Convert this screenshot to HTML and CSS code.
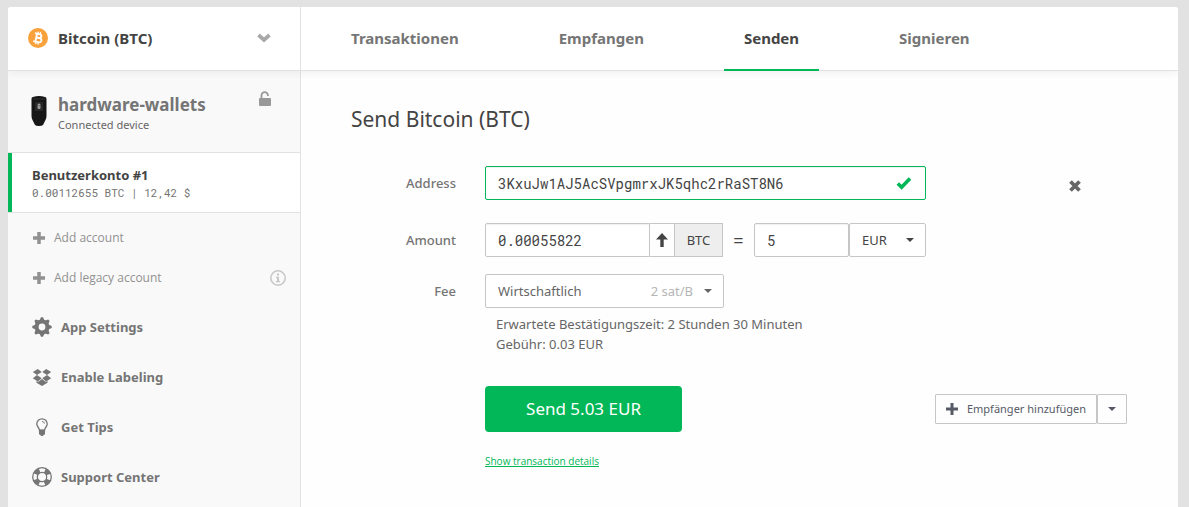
FILE: index.html
```html
<!DOCTYPE html>
<html lang="de">
<head>
    <meta charset="UTF-8">
    <meta name="viewport" content="width=device-width, initial-scale=1.0">
    <title>Send Bitcoin (BTC)</title>
    <link rel="stylesheet" href="styles.css">
</head>
<body>
    <div class="wallet">
        <header class="topbar">
            <button type="button" class="coin-select">
                <svg class="coin-logo" viewBox="0 0 20 20" aria-hidden="true">
                    <circle cx="10" cy="10" r="10" fill="#f9a13a"/>
                    <g transform="rotate(12 10 10)" fill="none" stroke="#fff" stroke-width="1.9">
                        <path d="M6 5.900h4.700c3 0 3 3.900 0 3.900H8.200M6 14.100h5.300c3.400 0 3.400-4.300 0-4.300M8.200 5.900v8.200"/>
                        <path d="M9 3.600v2M11.300 3.600v2M9 14.400v2M11.300 14.400v2" stroke-width="1.300"/>
                    </g>
                </svg>
                <span>Bitcoin (BTC)</span>
                <svg class="coin-chevron" viewBox="0 0 14 10" aria-hidden="true">
                    <path d="M1.500 2L7 7l5.500-5" fill="none" stroke="#a9a9a9" stroke-width="3.800"/>
                </svg>
            </button>
            <nav class="tabs">
                <a href="#transactions">Transaktionen</a>
                <a href="#receive">Empfangen</a>
                <a href="#send" class="active">Senden</a>
                <a href="#sign">Signieren</a>
            </nav>
        </header>

        <div class="content">
            <aside class="sidebar">
                <div class="device">
                    <svg class="device-image" viewBox="0 0 16 30" aria-hidden="true">
                        <path d="M2 1Q8-1 14 1q1.500 0 1.500 2v17q0 2-1 4l-2.500 5q-1 1-4 1t-4-1l-2.500-5q-1-2-1-4V3Q.500 1 2 1z" fill="#171717"/>
                        <path d="M2 3h12" stroke="#333" stroke-width="1"/>
                        <rect x="4" y="6" width="8" height="9" fill="#292929"/>
                        <rect x="6.500" y="9.500" width="3" height="3.500" rx="1" fill="#999"/>
                        <path d="M7 9.500V8.500q1-1 2 0v1" fill="none" stroke="#bbb"/>
                    </svg>
                    <div class="device-text">
                        <h2>hardware-wallets</h2>
                        <p>Connected device</p>
                    </div>
                    <svg class="device-lock" viewBox="0 0 12 16" aria-hidden="true">
                        <rect x="0" y="7" width="12" height="8" rx="1" fill="#999"/>
                        <path d="M2.500 7.500V4.300a3.200 3.200 0 0 1 6.400 0v.7" fill="none" stroke="#999" stroke-width="1.800"/>
                    </svg>
                </div>

                <a href="#account1" class="account">
                    <strong>Benutzerkonto #1</strong>
                    <span>0.00112655 BTC | 12,42 $</span>
                </a>

                <div class="add-list">
                    <button type="button" class="add-item">
                        <svg class="plus" viewBox="0 0 12 12" aria-hidden="true"><path d="M6 0v12M0 6h12" stroke="currentColor" stroke-width="3.500"/></svg>
                        <span>Add account</span>
                    </button>
                    <button type="button" class="add-item">
                        <svg class="plus" viewBox="0 0 12 12" aria-hidden="true"><path d="M6 0v12M0 6h12" stroke="currentColor" stroke-width="3.500"/></svg>
                        <span>Add legacy account</span>
                        <svg class="info" viewBox="0 0 16 16" aria-hidden="true">
                            <circle cx="8" cy="8" r="7.200" fill="none" stroke="#c6c6c6" stroke-width="1.500"/>
                            <path d="M7 3.500h2v2H7zM6 6.800h3v4.200h1v1.300H6V11h1V8H6z" fill="#c6c6c6"/>
                        </svg>
                    </button>
                </div>

                <nav class="menu">
                    <a href="#settings">
                        <svg viewBox="0 0 20 20" aria-hidden="true">
                            <circle cx="10" cy="10" r="5.400" fill="none" stroke="currentColor" stroke-width="4"/>
                            <g fill="currentColor">
                                <path id="tooth" d="M7.400 3.800L9 .3h2l1.600 3.500z"/>
                                <use href="#tooth" transform="rotate(45 10 10)"/>
                                <use href="#tooth" transform="rotate(90 10 10)"/>
                                <use href="#tooth" transform="rotate(135 10 10)"/>
                                <use href="#tooth" transform="rotate(180 10 10)"/>
                                <use href="#tooth" transform="rotate(225 10 10)"/>
                                <use href="#tooth" transform="rotate(270 10 10)"/>
                                <use href="#tooth" transform="rotate(315 10 10)"/>
                            </g>
                        </svg>
                        <span>App Settings</span>
                    </a>
                    <a href="#labeling">
                        <svg viewBox="0 0 20 20" aria-hidden="true">
                            <path d="M5.800 2L9.700 5 5 7.900.800 5zM14.200 2l5 3L15 7.900 10.300 5zM5 8.100l4.700 3.100-3.900 3.200-5-3.200zM15 8.100l4.200 3.100-5 3.200-3.900-3.200zM10 12l4 3 1.500-.9v1.700L10 19l-5.500-3.200v-1.700L6 15z" fill="currentColor"/>
                        </svg>
                        <span>Enable Labeling</span>
                    </a>
                    <a href="#tips">
                        <svg viewBox="0 0 20 20" aria-hidden="true">
                            <path d="M7.500 13.500C7.500 10.500 4.800 10 4.800 7a5.200 5.200 0 0 1 10.400 0c0 3-2.700 3.500-2.700 6.500z" fill="none" stroke="currentColor" stroke-width="1.300"/>
                            <path d="M10 4.500q2 0 2.500 2" fill="none" stroke="currentColor"/>
                            <path d="M7 12.500h6v4.800l-1.500.7-.5 1H9l-.5-1-1.500-.7z" fill="currentColor"/>
                        </svg>
                        <span>Get Tips</span>
                    </a>
                    <a href="#support">
                        <svg viewBox="0 0 20 20" aria-hidden="true">
                            <circle cx="10" cy="10" r="9.300" fill="none" stroke="currentColor" stroke-width="1.300"/>
                            <circle cx="10" cy="10" r="4.700" fill="none" stroke="currentColor" stroke-width="1.300"/>
                            <circle cx="10" cy="10" r="7" fill="none" stroke="currentColor" stroke-width="4.500" stroke-dasharray="5.500 5.500" stroke-dashoffset="-2.750"/>
                        </svg>
                        <span>Support Center</span>
                    </a>
                </nav>
            </aside>

            <main class="main">
                <h1>Send Bitcoin (BTC)</h1>
                <form class="send-form">
                    <label for="address">Address</label>
                    <div class="row">
                        <div class="address-box">
                            <input type="text" id="address" class="field mono valid" value="3KxuJw1AJ5AcSVpgmrxJK5qhc2rRaST8N6">
                            <svg class="check" viewBox="0 0 16 14" aria-hidden="true"><path d="M1.800 7.500l3.800 3.700L14 2.500" fill="none" stroke="#01b757" stroke-width="3.600"/></svg>
                        </div>
                        <button type="button" class="remove" aria-label="Remove">
                            <svg viewBox="0 0 12 12" aria-hidden="true"><path d="M1.500 1.500l9 9M10.500 1.500l-9 9" stroke="currentColor" stroke-width="3.800"/></svg>
                        </button>
                    </div>

                    <label for="amount">Amount</label>
                    <div class="row">
                        <div class="amount-group">
                            <input type="text" id="amount" class="field mono" value="0.00055822">
                            <button type="button" class="max" aria-label="Max">
                                <svg viewBox="0 0 12 14" aria-hidden="true"><path d="M6 0l6 6.500H7.700V14H4.300V6.500H0z" fill="currentColor"/></svg>
                            </button>
                            <span class="unit">BTC</span>
                        </div>
                        <span class="equals">=</span>
                        <div class="fiat-group">
                            <input type="text" class="field mono" value="5" aria-label="Amount in EUR">
                            <div class="select">
                                <select class="field" aria-label="Currency">
                                    <option>EUR</option>
                                    <option>USD</option>
                                </select>
                            </div>
                        </div>
                    </div>

                    <label for="fee">Fee</label>
                    <div class="fee">
                        <div class="select fee-select">
                            <select id="fee" class="field">
                                <option>Wirtschaftlich</option>
                                <option>Normal</option>
                            </select>
                            <span class="rate">2 sat/B</span>
                        </div>
                        <p>Erwartete Bestätigungszeit: 2 Stunden 30 Minuten<br>Gebühr: 0.03 EUR</p>
                    </div>

                    <div class="actions">
                        <button type="submit" class="send-btn">Send 5.03 EUR</button>
                        <div class="recipient-group">
                            <button type="button" class="recipient">
                                <svg class="plus" viewBox="0 0 12 12" aria-hidden="true"><path d="M6 0v12M0 6h12" stroke="currentColor" stroke-width="3"/></svg>
                                <span>Empfänger hinzufügen</span>
                            </button>
                            <button type="button" class="recipient-more" aria-label="More"><span class="caret"></span></button>
                        </div>
                    </div>
                    <a href="#details" class="details">Show transaction details</a>
                </form>
            </main>
        </div>
    </div>
</body>
</html>
```
FILE: styles.css
```css
:root {
    --green: #01b757;
    --line: #e2e2e2;
    --border: #c6c6c6;
    --text: #444;
    --muted: #757575;
}

* {
    box-sizing: border-box;
    margin: 0;
    padding: 0;
}

body {
    background: #e2e2e2;
    color: var(--text);
    font-family: "Noto Sans", "Open Sans", sans-serif;
    font-size: 13px;
    line-height: 20px;
    min-height: 100vh;
    padding: 7px 11px 0 8px;
    display: flex;
}

button, input, select {
    font: inherit;
    color: inherit;
}

button {
    background: none;
    border: none;
    cursor: pointer;
}

a {
    color: inherit;
    text-decoration: none;
}

svg {
    display: block;
    flex: none;
}

.wallet {
    flex: 1;
    display: flex;
    flex-direction: column;
    background: #fefefe;
    border-radius: 3px 3px 0 0;
    overflow: hidden;
}

/* Top bar */
.topbar {
    display: flex;
    height: 64px;
    background: #fff;
    border-bottom: 1px solid var(--line);
    box-shadow: 0 2px 8px rgba(0, 0, 0, 0.06);
    position: relative;
}

.coin-select {
    width: 293px;
    display: flex;
    align-items: center;
    gap: 10px;
    padding: 0 29px 2px 20px;
    border-right: 1px solid var(--line);
    font-size: 15px;
    font-weight: 700;
}

.coin-logo {
    width: 20px;
    height: 20px;
}

.coin-chevron {
    width: 14px;
    height: 10px;
    margin-left: auto;
}

.tabs {
    display: flex;
    gap: 60px;
    padding-left: 30px;
}

.tabs a {
    height: 64px;
    padding: 0 20px;
    line-height: 63px;
    font-size: 15px;
    font-weight: 700;
    color: var(--muted);
}

.tabs .active {
    color: var(--text);
    border-bottom: 2px solid var(--green);
}

.content {
    flex: 1;
    display: flex;
}

/* Sidebar */
.sidebar {
    width: 293px;
    flex: none;
    background: #f9f9f9;
    border-right: 1px solid var(--line);
}

.device {
    display: flex;
    align-items: flex-start;
    padding: 20px 29px 17px 23px;
}

.device-image {
    width: 16px;
    height: 30px;
    margin-top: 5px;
}

.device-text {
    flex: 1;
    padding-left: 11px;
}

.device h2 {
    font-size: 17px;
    line-height: 28px;
    color: var(--muted);
}

.device p {
    font-size: 11px;
    line-height: 12px;
    padding-bottom: 4px;
    color: #666;
}

.device-lock {
    width: 12px;
    height: 16px;
}

.account {
    display: block;
    background: #fff;
    border: solid var(--line);
    border-width: 1px 0;
    box-shadow: inset 4px 0 var(--green);
    padding: 12px 24px 11px;
}

.account strong,
.account span {
    display: block;
}

.account span {
    font-family: "Roboto Mono", "Liberation Mono", monospace;
    font-size: 11px;
    line-height: 16px;
    color: var(--muted);
}

.add-list {
    padding-top: 5px;
}

.add-item {
    display: flex;
    align-items: center;
    gap: 9px;
    width: 100%;
    height: 40px;
    padding: 0 14px 0 25px;
    font-family: "Open Sans", "Noto Sans", sans-serif;
    font-size: 12px;
    color: #919191;
}

.plus {
    width: 12px;
    height: 12px;
}

.info {
    width: 16px;
    height: 16px;
    margin-left: auto;
}

.menu {
    padding-top: 4px;
}

.menu a {
    display: flex;
    align-items: center;
    gap: 9px;
    height: 50px;
    padding: 0 24px;
    font-weight: 700;
    color: var(--muted);
}

.menu svg {
    width: 20px;
    height: 20px;
}

/* Send form */
.main {
    flex: 1;
    padding: 33px 51px 30px 50px;
}

h1 {
    font-size: 21px;
    line-height: 30px;
    font-weight: 400;
    margin-bottom: 32px;
}

.send-form {
    display: grid;
    grid-template-columns: 105px 1fr;
    column-gap: 29px;
}

.send-form label {
    line-height: 34px;
    text-align: right;
    font-weight: 500;
    color: var(--muted);
}

.row {
    display: flex;
    align-items: flex-start;
}

.field {
    width: 100%;
    height: 34px;
    padding: 0 12px;
    background: #fff;
    border: 1px solid var(--border);
    border-radius: 2px;
    box-shadow: inset 0 1px 1px rgba(0, 0, 0, 0.06);
    outline: none;
}

.mono {
    font-family: "Roboto Mono", "Liberation Mono", monospace;
    font-size: 14px;
}

.valid {
    border-color: var(--green);
    padding-right: 40px;
}

.address-box {
    width: 441px;
    position: relative;
    margin-bottom: 23px;
}

.check {
    position: absolute;
    right: 14px;
    top: 10px;
    width: 16px;
    height: 14px;
}

.remove {
    margin-left: auto;
    padding: 14px 46px 8px 8px;
    color: #666;
}

.remove svg {
    width: 12px;
    height: 12px;
}

.amount-group {
    display: flex;
    width: 238px;
    margin-bottom: 17px;
}

.amount-group .field {
    flex: 1;
    min-width: 0;
    border-radius: 2px 0 0 2px;
}

.max {
    width: 24px;
    padding: 0 6px;
    border: solid var(--border);
    border-width: 1px 0;
}

.max svg {
    width: 12px;
    height: 14px;
}

.unit {
    width: 49px;
    text-align: center;
    line-height: 32px;
    background: #eee;
    border: 1px solid var(--border);
}

.equals {
    width: 31px;
    line-height: 34px;
    text-align: center;
    font-size: 18px;
}

.fiat-group {
    display: flex;
    width: 172px;
}

.fiat-group > * {
    flex: 1 1 95px;
    min-width: 0;
}

.fiat-group .select {
    flex-basis: 77px;
}

.select {
    position: relative;
}

.select select {
    appearance: none;
    box-shadow: none;
}

.select::after,
.caret {
    content: "";
    display: block;
    border: 4px solid transparent;
    border-top-color: currentColor;
    border-bottom: none;
}

.select::after {
    position: absolute;
    right: 12px;
    top: 15px;
    pointer-events: none;
}

.fee {
    color: #666;
}

.fee-select {
    width: 239px;
}

.rate {
    position: absolute;
    right: 31px;
    top: 7px;
    color: #b5b5b5;
    pointer-events: none;
}

.fee p {
    padding: 6px 11px 0;
}

.actions {
    grid-column: 2;
    display: flex;
    justify-content: space-between;
    align-items: center;
    margin-top: 32px;
}

.send-btn {
    width: 197px;
    height: 46px;
    background: var(--green);
    color: #fff;
    border-radius: 4px;
    font-size: 17px;
}

.recipient-group {
    display: flex;
    color: #555a66;
}

.recipient,
.recipient-more {
    display: flex;
    align-items: center;
    justify-content: center;
    gap: 9px;
    height: 30px;
    padding: 0 10px;
    border: 1px solid var(--border);
    border-radius: 1px;
    font-size: 11px;
}

.recipient-more {
    width: 30px;
}

.details {
    grid-column: 2;
    justify-self: start;
    margin-top: 19px;
    font-family: "Open Sans", "Noto Sans", sans-serif;
    font-size: 10px;
    color: var(--green);
    text-decoration: underline;
}
```
